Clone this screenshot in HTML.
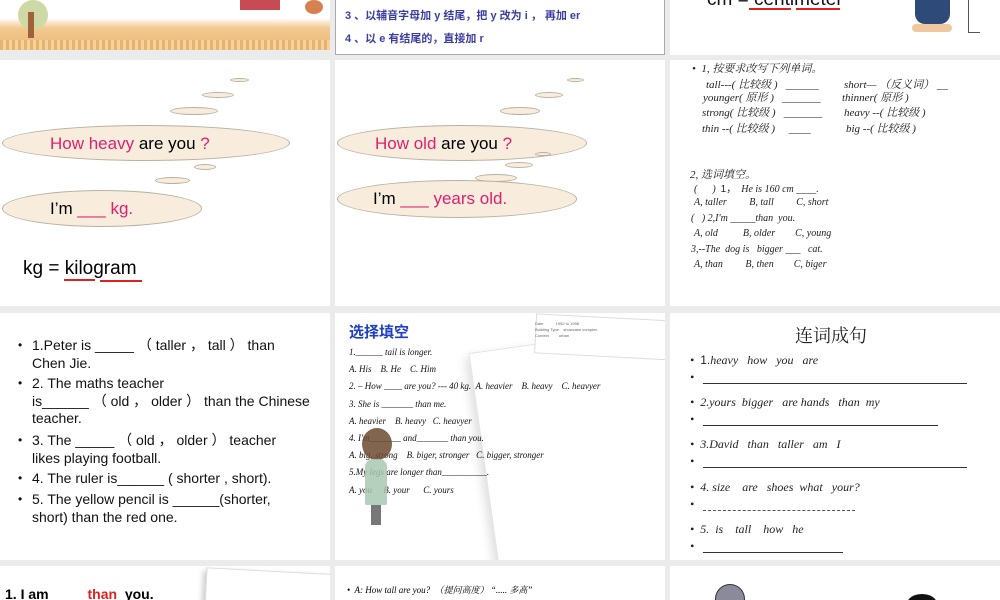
<!DOCTYPE html>
<html><head><meta charset="utf-8">
<style>
*{margin:0;padding:0;box-sizing:border-box}
html,body{width:1000px;height:600px;overflow:hidden}
body{background:#ebebeb;position:relative;font-family:"Liberation Sans","Noto Sans CJK SC",sans-serif}
.s{position:absolute;background:#fff;overflow:hidden}
.a{position:absolute;white-space:nowrap}
.it{font-family:"Liberation Serif","Noto Serif CJK SC",serif;font-style:italic}
.cl{position:absolute;background:#f8eddc;border:1px solid #b9b0a3;border-radius:50%}
.pk{color:#e0206e}
.li{position:absolute;font-size:14px;color:#111;line-height:17.5px;white-space:nowrap}
.li:before{content:"•";position:absolute;left:-14px;font-size:12px}
</style></head><body>

<!-- Row 1 -->
<div class="s" style="left:0;top:0;width:330px;height:50px;background:linear-gradient(#fff 0,#fff 18px,#f2c98e 28px,#eab879 50px)">
  <div style="position:absolute;left:0;top:40px;width:330px;height:10px;background:repeating-linear-gradient(90deg,#e6b36e 0 3px,#f4d29c 3px 6px)"></div>
  <div style="position:absolute;left:18px;top:0;width:30px;height:30px;border-radius:50%;background:#cfd9a6"></div>
  <div style="position:absolute;left:28px;top:12px;width:6px;height:26px;background:#a0623a"></div>
  <div style="position:absolute;left:240px;top:0;width:40px;height:10px;background:#c84a55"></div>
  <div style="position:absolute;left:305px;top:0;width:18px;height:14px;border-radius:50%;background:#d98050"></div>
</div>
<div class="s" style="left:335px;top:0;width:330px;height:55px;border:1px solid #aaa;border-top:none">
  <div class="a" style="left:9px;top:7px;font-size:11px;color:#3b3ea0;font-weight:bold">3 、以辅音字母加 y 结尾，把 y 改为 i ， 再加 er</div>
  <div class="a" style="left:9px;top:30px;font-size:11px;color:#3b3ea0;font-weight:bold">4 、以 e 有结尾的，直接加 r</div>
</div>
<div class="s" style="left:670px;top:0;width:330px;height:55px">
  <div class="a" style="left:37px;top:-11px;font-size:19px;color:#111">cm = centimeter</div>
  <div style="position:absolute;left:79px;top:8px;width:42px;height:2px;background:#d22"></div>
  <div style="position:absolute;left:126px;top:8px;width:44px;height:2px;background:#d22"></div>
  <div style="position:absolute;left:245px;top:0;width:35px;height:24px;background:#2e4a78;border-radius:0 0 10px 10px"></div>
  <div style="position:absolute;left:242px;top:24px;width:40px;height:8px;background:#f0c8a0;border-radius:4px"></div>
  <div style="position:absolute;left:298px;top:0;width:1px;height:32px;background:#555"></div>
  <div style="position:absolute;left:298px;top:32px;width:12px;height:1px;background:#555"></div>
</div>

<!-- Row 2 -->
<div class="s" style="left:0;top:60px;width:330px;height:246px">
  <div class="cl" style="left:230px;top:18px;width:19px;height:4px"></div>
  <div class="cl" style="left:202px;top:32px;width:32px;height:6px"></div>
  <div class="cl" style="left:170px;top:47px;width:48px;height:8px"></div>
  <div class="cl" style="left:2px;top:65px;width:288px;height:36px"></div>
  <div class="cl" style="left:194px;top:104px;width:22px;height:6px"></div>
  <div class="cl" style="left:155px;top:117px;width:35px;height:7px"></div>
  <div class="cl" style="left:2px;top:130px;width:200px;height:37px"></div>
  <div class="a" style="left:50px;top:74px;font-size:17px"><span class="pk">How heavy</span> are you <span class="pk">?</span></div>
  <div class="a" style="left:50px;top:139px;font-size:17px">I’m <span class="pk">___ kg.</span></div>
  <div class="a" style="left:23px;top:198px;font-size:19px">kg = kilogram</div>
  <div style="position:absolute;left:64px;top:219px;width:31px;height:2px;background:#d22"></div>
  <div style="position:absolute;left:100px;top:220px;width:42px;height:2px;background:#d22"></div>
</div>
<div class="s" style="left:335px;top:60px;width:330px;height:246px">
  <div class="cl" style="left:232px;top:18px;width:17px;height:4px"></div>
  <div class="cl" style="left:200px;top:32px;width:28px;height:6px"></div>
  <div class="cl" style="left:165px;top:47px;width:40px;height:8px"></div>
  <div class="cl" style="left:2px;top:65px;width:250px;height:36px"></div>
  <div class="cl" style="left:200px;top:92px;width:16px;height:4px"></div>
  <div class="cl" style="left:170px;top:102px;width:28px;height:6px"></div>
  <div class="cl" style="left:140px;top:114px;width:42px;height:8px"></div>
  <div class="cl" style="left:2px;top:120px;width:240px;height:38px"></div>
  <div class="a" style="left:40px;top:74px;font-size:17px"><span class="pk">How old</span> are you <span class="pk">?</span></div>
  <div class="a" style="left:38px;top:129px;font-size:17px">I’m <span class="pk">___ years old.</span></div>
</div>
<div class="s it" style="left:670px;top:60px;width:330px;height:246px;font-size:11px;color:#222">
  <div class="a" style="left:22px;top:0">•&nbsp; 1, 按要求改写下列单词。</div>
  <div class="a" style="left:36px;top:16px">tall---( 比较级 )&nbsp;&nbsp;&nbsp;______</div>
  <div class="a" style="left:174px;top:16px">short— （反义词） __</div>
  <div class="a" style="left:33px;top:29px">younger( 原形 )&nbsp;&nbsp;&nbsp;_______</div>
  <div class="a" style="left:172px;top:29px">thinner( 原形 )</div>
  <div class="a" style="left:32px;top:44px">strong( 比较级 )&nbsp;&nbsp;&nbsp;_______</div>
  <div class="a" style="left:174px;top:44px">heavy --( 比较级 )</div>
  <div class="a" style="left:32px;top:60px">thin --( 比较级 )&nbsp;&nbsp;&nbsp;&nbsp;&nbsp;____</div>
  <div class="a" style="left:176px;top:60px">big --( 比较级 )</div>
  <div class="a" style="left:20px;top:106px">2, 选词填空。</div>
  <div class="a" style="left:24px;top:120px;font-size:10px">(&nbsp;&nbsp;&nbsp;&nbsp;&nbsp;&nbsp;)&nbsp; <span style="font-style:normal;font-family:'Liberation Sans'">1，</span>&nbsp; He is 160 cm ____.</div>
  <div class="a" style="left:24px;top:137px;font-size:10px">A, taller&nbsp;&nbsp;&nbsp;&nbsp;&nbsp;&nbsp;&nbsp;&nbsp;&nbsp;B, tall&nbsp;&nbsp;&nbsp;&nbsp;&nbsp;&nbsp;&nbsp;&nbsp;&nbsp;C, short</div>
  <div class="a" style="left:21px;top:153px;font-size:10px">(&nbsp;&nbsp; ) 2,I'm _____than&nbsp; you.</div>
  <div class="a" style="left:24px;top:168px;font-size:10px">A, old&nbsp;&nbsp;&nbsp;&nbsp;&nbsp;&nbsp;&nbsp;&nbsp;&nbsp;&nbsp;B, older&nbsp;&nbsp;&nbsp;&nbsp;&nbsp;&nbsp;&nbsp;&nbsp;C, young</div>
  <div class="a" style="left:21px;top:184px;font-size:10px">3,--The&nbsp; dog is&nbsp;&nbsp; bigger ___&nbsp;&nbsp; cat.</div>
  <div class="a" style="left:24px;top:199px;font-size:10px">A, than&nbsp;&nbsp;&nbsp;&nbsp;&nbsp;&nbsp;&nbsp;&nbsp;&nbsp;B, then&nbsp;&nbsp;&nbsp;&nbsp;&nbsp;&nbsp;&nbsp;&nbsp;C, biger</div>
</div>

<!-- Row 3 -->
<div class="s" style="left:0;top:313px;width:330px;height:247px">
  <div class="li" style="left:32px;top:24px">1.Peter is _____ （ taller ， tall ） than<br>Chen Jie.</div>
  <div class="li" style="left:32px;top:62px">2. The maths teacher<br>is______ （ old ， older ） than the Chinese<br>teacher.</div>
  <div class="li" style="left:32px;top:119px">3. The _____ （ old ， older ） teacher<br>likes playing football.</div>
  <div class="li" style="left:32px;top:157px">4. The ruler is______ ( shorter , short).</div>
  <div class="li" style="left:32px;top:178px">5. The yellow pencil is ______(shorter,<br>short) than the red one.</div>
</div>
<div class="s" style="left:335px;top:313px;width:330px;height:247px">
  <div style="position:absolute;left:150px;top:25px;width:200px;height:250px;background:#fff;border:1px solid #e4e4e4;transform:rotate(-8deg);box-shadow:-4px 4px 10px #ddd"></div>
  <div style="position:absolute;left:200px;top:4px;width:140px;height:40px;background:#fff;border:1px solid #ddd;transform:rotate(3deg)"></div>
  <div class="a" style="left:200px;top:8px;font-size:4px;color:#666;line-height:6px">Date&nbsp;&nbsp;&nbsp;&nbsp;&nbsp;&nbsp;&nbsp;&nbsp;&nbsp;&nbsp;&nbsp;1952 to 1998<br>Building Type&nbsp;&nbsp;&nbsp; showcase complex<br>Context&nbsp;&nbsp;&nbsp;&nbsp;&nbsp;&nbsp;&nbsp;&nbsp; urban</div>
  <div class="a" style="left:14px;top:8px;font-size:15px;font-weight:bold;color:#2040c0;font-family:'Noto Sans CJK SC',sans-serif">选择填空</div>
  <div class="a it" style="left:14px;top:31px;font-size:9px;line-height:17.2px;color:#111">1.______ tail is longer.<br>A. His&nbsp;&nbsp;&nbsp; B. He&nbsp;&nbsp;&nbsp; C. Him<br>2. – How ____ are you? --- 40 kg.&nbsp; A. heavier&nbsp;&nbsp;&nbsp; B. heavy&nbsp;&nbsp;&nbsp; C. heavyer<br>3. She is _______ than me.<br>A. heavier&nbsp;&nbsp;&nbsp; B. heavy&nbsp;&nbsp; C. heavyer<br>4. I'm_______ and_______ than you.<br>A. big, strong&nbsp;&nbsp;&nbsp; B. biger, stronger&nbsp;&nbsp; C. bigger, stronger<br>5.My legs are longer than__________.<br>A. you&nbsp;&nbsp;&nbsp;&nbsp; B. your&nbsp;&nbsp;&nbsp;&nbsp;&nbsp; C. yours</div>
  <div style="position:absolute;left:27px;top:115px;width:30px;height:32px;border-radius:50%;background:#6b4a30;opacity:.85"></div>
  <div style="position:absolute;left:30px;top:146px;width:22px;height:46px;background:#a8c8b0;border-radius:8px 8px 2px 2px;opacity:.85"></div>
  <div style="position:absolute;left:36px;top:192px;width:10px;height:20px;background:#777"></div>
</div>
<div class="s it" style="left:670px;top:313px;width:330px;height:247px;font-size:12px;color:#222">
  <div class="a" style="left:125px;top:9px;font-size:18px;font-style:normal;font-family:'Noto Serif CJK SC',serif">连词成句</div>
  <div class="a" style="left:20px;top:40px">•&nbsp; <span style="font-style:normal;font-family:'Liberation Sans'">1.</span>heavy&nbsp;&nbsp; how&nbsp;&nbsp; you&nbsp;&nbsp; are</div>
  <div class="a" style="left:20px;top:57px">•</div><div style="position:absolute;left:33px;top:70px;width:264px;height:1px;background:#333"></div>
  <div class="a" style="left:20px;top:82px">•&nbsp; 2.yours&nbsp; bigger&nbsp;&nbsp; are hands&nbsp;&nbsp; than&nbsp; my</div>
  <div class="a" style="left:20px;top:99px">•</div><div style="position:absolute;left:33px;top:112px;width:235px;height:1px;background:#333"></div>
  <div class="a" style="left:20px;top:124px">•&nbsp; 3.David&nbsp;&nbsp; than&nbsp;&nbsp; taller&nbsp;&nbsp; am&nbsp;&nbsp; I</div>
  <div class="a" style="left:20px;top:141px">•</div><div style="position:absolute;left:33px;top:154px;width:264px;height:1px;background:#333"></div>
  <div class="a" style="left:20px;top:167px">•&nbsp; 4. size&nbsp;&nbsp;&nbsp; are&nbsp;&nbsp; shoes&nbsp; what&nbsp;&nbsp; your?</div>
  <div class="a" style="left:20px;top:184px">•</div><div style="position:absolute;left:33px;top:197px;width:152px;border-top:1px dashed #555"></div>
  <div class="a" style="left:20px;top:209px">•&nbsp; 5.&nbsp; is&nbsp;&nbsp;&nbsp; tall&nbsp;&nbsp;&nbsp; how&nbsp;&nbsp; he</div>
  <div class="a" style="left:20px;top:226px">•</div><div style="position:absolute;left:33px;top:239px;width:140px;height:1px;background:#333"></div>
</div>

<!-- Row 4 -->
<div class="s" style="left:0;top:566px;width:330px;height:34px">
  <div style="position:absolute;left:205px;top:5px;width:140px;height:60px;border:1px solid #ddd;transform:rotate(3deg);box-shadow:-3px 3px 6px #ccc"></div>
  <div class="a" style="left:5px;top:20px;font-size:14px;font-weight:bold">1. I am&nbsp;&nbsp;&nbsp;&nbsp;&nbsp;&nbsp;&nbsp;&nbsp;&nbsp; <span style="color:#d22">than</span>&nbsp; you.</div>
</div>
<div class="s" style="left:335px;top:566px;width:330px;height:34px">
  <div class="a it" style="left:12px;top:17px;font-size:9px">•&nbsp; A: How tall are you?&nbsp; （提问高度） “..... 多高”</div>
</div>
<div class="s" style="left:670px;top:566px;width:330px;height:34px">
  <div style="position:absolute;left:45px;top:18px;width:30px;height:30px;border-radius:50%;background:#8a8a9a;border:1px solid #333"></div>
  <div style="position:absolute;left:237px;top:28px;width:30px;height:20px;border-radius:50%;background:#111"></div>
</div>
</body></html>
